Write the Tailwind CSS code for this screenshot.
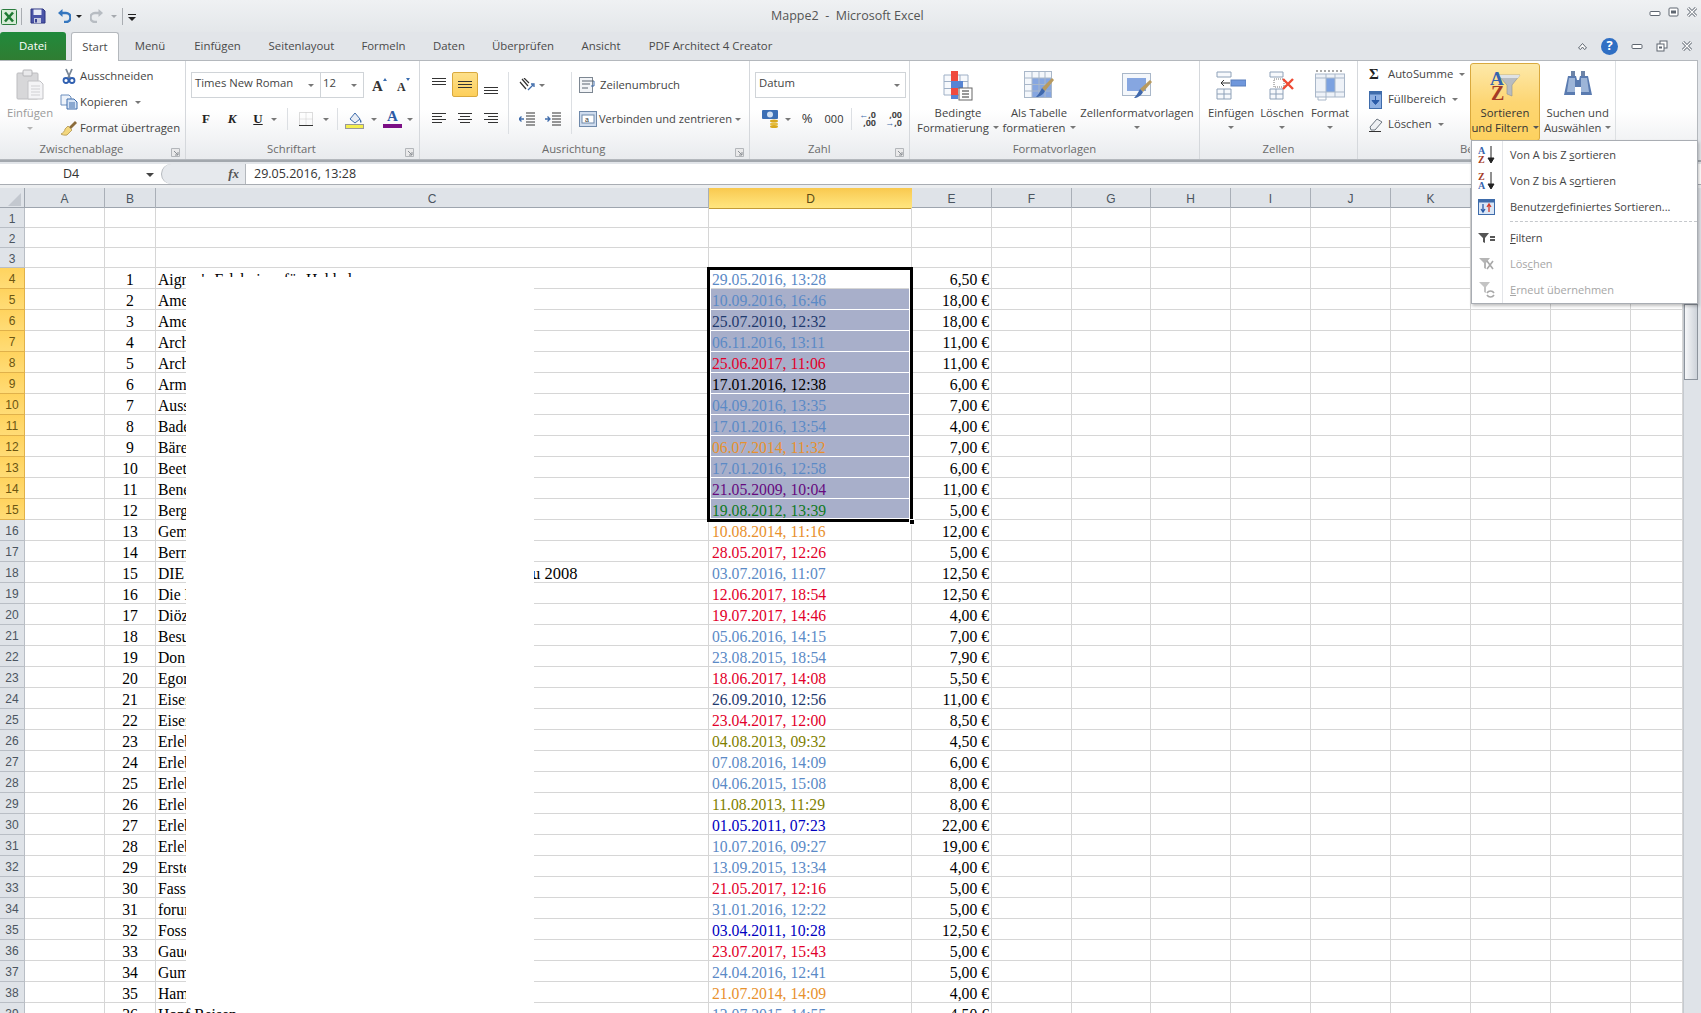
<!DOCTYPE html>
<html lang="de">
<head>
<meta charset="UTF-8">
<title>Mappe2 - Microsoft Excel</title>
<script src="https://cdn.jsdelivr.net/npm/@tailwindcss/browser@4"></script>
</head>
<body class="bg-white">
<div class="relative w-[1701px] h-[1013px] overflow-hidden flex flex-col font-['Open_Sans',sans-serif] text-[11.3px] text-[#444] bg-[#e2e5e9]">

  <!-- title bar -->
  <div class="relative h-[32px] shrink-0 flex items-center bg-linear-to-b from-[#eff1f3] to-[#e4e7ea]">
    <svg class="ml-[1px] mt-[1px]" width="16" height="16" viewBox="0 0 16 16"><rect x=".5" y=".5" width="15" height="15" rx="1" fill="#d8ecd8" stroke="#2b7d3f"/><path d="M4 3.5l8 9M12 3.5l-8 9" stroke="#1d7a32" stroke-width="2.6"/></svg>
    <div class="ml-[4px] w-px h-[17px] bg-[#a9adb2]"></div>
    <svg class="ml-[8px]" width="16" height="16" viewBox="0 0 16 16"><path d="M1 1h12l2 2v12H1z" fill="#4b55a8" stroke="#2c3580"/><rect x="3.5" y="1.500" width="8" height="5.500" fill="#e7eaf5"/><rect x="4" y="10" width="7" height="5" fill="#c7cbe0"/><rect x="5" y="11" width="2" height="3.500" fill="#3a4392"/></svg>
    <svg class="ml-[11px]" width="14" height="14" viewBox="0 0 14 14"><path d="M3 4h6a3.500 3.500 0 0 1 0 9H7" fill="none" stroke="#3577bf" stroke-width="2.600"/><path d="M5.500 0v8L1 4z" fill="#3577bf"/></svg>
    <div class="ml-[5px] w-0 h-0 border-x-[3px] border-t-[3px] border-x-transparent border-t-[#222]"></div>
    <svg class="ml-[8px]" width="14" height="14" viewBox="0 0 14 14"><path d="M11 4H5a3.500 3.500 0 0 0 0 9h2" fill="none" stroke="#b7bcc2" stroke-width="2.400"/><path d="M8.500 0v8L13 4z" fill="#b7bcc2"/></svg>
    <div class="ml-[7px] w-0 h-0 border-x-[3px] border-t-[3px] border-x-transparent border-t-[#a5a9ae]"></div>
    <div class="ml-[5px] w-px h-[17px] bg-[#a9adb2]"></div>
    <div class="ml-[5px] mt-[3px] flex flex-col items-center gap-[2px]"><div class="w-[8px] h-px bg-[#222]"></div><div class="w-0 h-0 border-x-[4px] border-t-[4px] border-x-transparent border-t-[#222]"></div></div>
    <div class="absolute left-[771px] top-[6px] text-[12.5px] leading-[19px] text-[#555]">Mappe2&nbsp; -&nbsp; Microsoft Excel</div>
    <div class="absolute right-[3px] top-[6px] flex items-center gap-[7px]">
      <svg width="12" height="12" viewBox="0 0 12 12"><rect x="1" y="5.500" width="10" height="4" rx="1" fill="#fff" stroke="#5e6670"/></svg>
      <svg width="11" height="11" viewBox="0 0 11 11"><rect x="1" y="1" width="9" height="8" rx="1" fill="#fff" stroke="#5e6670"/><rect x="3" y="3.500" width="5" height="3" fill="#5e6670"/></svg>
      <svg width="12" height="12" viewBox="0 0 12 12"><path d="M2 2l8 8M10 2l-8 8" stroke="#5e6670" stroke-width="3"/><path d="M2 2l8 8M10 2l-8 8" stroke="#fff" stroke-width="1.200"/></svg>
    </div>
  </div>

  <!-- tabs -->
  <div class="relative z-10 h-[28px] shrink-0 flex items-stretch text-[11.4px] text-[#4a4a4a]">
    <div class="w-[66px] rounded-t-[3px] flex items-center justify-center bg-linear-to-b from-[#1f8a3c] to-[#2f7d32] text-white">Datei</div>
    <div class="ml-[5px] w-[48px] h-[29px] rounded-t-[3px] flex items-center justify-center bg-white border border-b-0 border-[#b4b8bd]">Start</div>
    <div class="w-[62px] flex items-center justify-center">Menü</div>
    <div class="w-[73px] flex items-center justify-center">Einfügen</div>
    <div class="w-[95px] flex items-center justify-center">Seitenlayout</div>
    <div class="w-[69px] flex items-center justify-center">Formeln</div>
    <div class="w-[62px] flex items-center justify-center">Daten</div>
    <div class="w-[86px] flex items-center justify-center">Überprüfen</div>
    <div class="w-[70px] flex items-center justify-center">Ansicht</div>
    <div class="w-[149px] flex items-center justify-center">PDF Architect 4 Creator</div>
    <div class="ml-auto mr-[8px] flex items-center gap-[13px]">
      <svg width="11" height="10" viewBox="0 0 11 10"><path d="M1.500 7L5.500 2.500 9.500 7 7.500 8.500 5.500 6 3.500 8.500z" fill="#fff" stroke="#5e6670"/></svg>
      <div class="w-[17px] h-[17px] rounded-full bg-[#2f6fc4] text-white text-[13px] font-bold flex items-center justify-center">?</div>
      <svg width="12" height="12" viewBox="0 0 12 12"><rect x="1" y="4.500" width="10" height="4" rx="1" fill="#fff" stroke="#5e6670"/></svg>
      <svg width="12" height="12" viewBox="0 0 12 12"><rect x="4" y="1" width="7" height="7" fill="#fff" stroke="#5e6670"/><rect x="1" y="4" width="7" height="7" fill="#fff" stroke="#5e6670"/><rect x="3" y="6.500" width="3" height="2" fill="#5e6670"/></svg>
      <svg width="12" height="12" viewBox="0 0 12 12"><path d="M2 2l8 8M10 2l-8 8" stroke="#5e6670" stroke-width="3"/><path d="M2 2l8 8M10 2l-8 8" stroke="#fff" stroke-width="1.200"/></svg>
    </div>
  </div>

  <!-- ribbon -->
  <div class="h-[100px] shrink-0 w-[1698px] flex items-stretch border border-l-0 border-[#b4b8bd] bg-linear-to-b from-white via-white to-[#e9ebee]">

    <!-- Zwischenablage -->
    <div class="w-[186px] shrink-0 flex flex-col border-r border-[#d5d8dc]">
      <div class="h-[81px] flex">
        <div class="w-[60px] flex flex-col items-center pt-[8px]">
          <svg width="28" height="31" viewBox="0 0 28 31"><rect x="1" y="4" width="21" height="26" rx="1" fill="#d7d7d9" stroke="#bdbdc0"/><rect x="7" y="1" width="9" height="6" rx="1" fill="#e9e9eb" stroke="#b5b5b8"/><path d="M12 12h12l3 3v15H12z" fill="#f4f4f6" stroke="#c3c3c6"/><path d="M15 17h9M15 20h9M15 23h9M15 26h9" stroke="#d0d0d3"/></svg>
          <div class="mt-[5px] text-[#9a9a9a] leading-[16px]">Einfügen</div>
          <div class="mt-[6px] w-0 h-0 border-x-[3px] border-t-[3px] border-x-transparent border-t-[#b5b5b5]"></div>
        </div>
        <div class="flex flex-col pt-[2px]">
          <div class="h-[26px] flex items-center"><svg class="ml-[2px] mr-[4px]" width="14" height="16" viewBox="0 0 14 16"><path d="M4 1l4 9M10 1L6 10" stroke="#7a8796" stroke-width="1.800"/><circle cx="4" cy="12.500" r="2.500" fill="none" stroke="#2f5fb0" stroke-width="1.800"/><circle cx="10" cy="12.500" r="2.500" fill="none" stroke="#2f5fb0" stroke-width="1.800"/></svg>Ausschneiden</div>
          <div class="h-[26px] flex items-center"><svg class="mr-[2px]" width="18" height="16" viewBox="0 0 18 16"><path d="M1 1h8l2 2v8H1z" fill="#eef3fa" stroke="#6d8fbe"/><path d="M7 5h7l3 3v7H7z" fill="#d6e4f6" stroke="#3f6cab"/><path d="M9 9h6M9 11h6M9 13h6" stroke="#3f6cab"/></svg>Kopieren<div class="ml-[7px] w-0 h-0 border-x-[3px] border-t-[3px] border-x-transparent border-t-[#777]"></div></div>
          <div class="h-[26px] flex items-center"><svg class="mr-[2px]" width="18" height="16" viewBox="0 0 18 16"><path d="M9 7l6-6 2 2-6 6z" fill="#8a6b3a"/><path d="M8 6l4 4-5 5c-2 .5-5 0-6-1 2-1 4-3 4-5z" fill="#f3d77e" stroke="#a78a3f" stroke-width=".7"/></svg>Format übertragen</div>
        </div>
      </div>
      <div class="h-[17px] pb-[2px] relative flex items-center justify-center pr-[22px] text-[#6b6b6b]">Zwischenablage
        <svg class="absolute right-[5px] top-[6px]" width="9" height="9" viewBox="0 0 9 9"><path d="M.5.500h8v8h-8z" fill="#e9e9ea" stroke="#b3b6ba"/><path d="M3 3l4 4M7 4v3H4" fill="none" stroke="#8b8f94"/></svg>
      </div>
    </div>

    <!-- Schriftart -->
    <div class="w-[234px] shrink-0 flex flex-col border-r border-[#d5d8dc]">
      <div class="h-[81px] flex flex-col pt-[11px]">
        <div class="h-[26px] flex items-center pl-[5px]">
          <div class="w-[130px] h-[26px] pb-[3px] border border-[#d0d4d8] bg-white flex items-center pl-[3px] relative">Times New Roman<div class="absolute right-[6px] top-[11px] w-0 h-0 border-x-[3px] border-t-[3px] border-x-transparent border-t-[#777]"></div></div>
          <div class="w-[43px] h-[26px] pb-[3px] border border-l-0 border-[#d0d4d8] bg-white flex items-center pl-[2px] relative">12<div class="absolute right-[6px] top-[11px] w-0 h-0 border-x-[3px] border-t-[3px] border-x-transparent border-t-[#777]"></div></div>
          <svg class="ml-[7px]" width="16" height="16" viewBox="0 0 16 16"><text x="1" y="14" font-family="Liberation Serif" font-weight="700" font-size="15" fill="#333">A</text><path d="M12 4l2-3 2 3z" fill="#3a6db0"/></svg>
          <svg class="ml-[8px]" width="16" height="16" viewBox="0 0 16 16"><text x="2" y="14" font-family="Liberation Serif" font-weight="700" font-size="12" fill="#333">A</text><path d="M11 1l2 3 2-3z" fill="#3a6db0"/></svg>
        </div>
        <div class="mt-[8px] h-[26px] flex items-center pl-[7px] font-['Liberation_Serif',serif] text-[13px] font-bold text-[#222]">
          <div class="w-[26px] text-center">F</div>
          <div class="w-[26px] text-center italic">K</div>
          <div class="w-[26px] text-center underline">U</div>
          <div class="w-0 h-0 border-x-[3px] border-t-[3px] border-x-transparent border-t-[#777]"></div>
          <div class="ml-[10px] w-px h-[22px] bg-[#dcdfe3]"></div>
          <svg class="ml-[11px]" width="14" height="14" viewBox="0 0 14 14"><path d="M.5.500h13v13H.5z" fill="none" stroke="#bbb" stroke-dasharray="1 1"/><path d="M7 .5v13M.5 7h13" stroke="#ccc" stroke-dasharray="1 1"/><path d="M0 13.500h14" stroke="#333"/></svg>
          <div class="ml-[10px] w-0 h-0 border-x-[3px] border-t-[3px] border-x-transparent border-t-[#777]"></div>
          <div class="ml-[8px] w-px h-[22px] bg-[#dcdfe3]"></div>
          <svg class="ml-[7px]" width="19" height="19" viewBox="0 0 19 19"><path d="M5 9l5-6 5 6-5 4z" fill="#e8edf5" stroke="#3f6cab"/><path d="M15 9c1.500 1 2 3 1 4-1-.5-1.500-2-1-4z" fill="#3f6cab"/><rect x=".5" y="14.500" width="18" height="4" fill="#f4ee4e" stroke="#999"/></svg>
          <div class="ml-[7px] w-0 h-0 border-x-[3px] border-t-[3px] border-x-transparent border-t-[#777]"></div>
          <div class="ml-[6px] w-[19px] flex flex-col items-center"><div class="leading-[13px] text-[15px] text-[#2b5aa5]">A</div><div class="mt-[1px] w-[19px] h-[4px] bg-[#7b0f85]"></div></div>
          <div class="ml-[5px] w-0 h-0 border-x-[3px] border-t-[3px] border-x-transparent border-t-[#777]"></div>
        </div>
      </div>
      <div class="h-[17px] pb-[2px] relative flex items-center justify-center pr-[22px] text-[#6b6b6b]">Schriftart
        <svg class="absolute right-[5px] top-[6px]" width="9" height="9" viewBox="0 0 9 9"><path d="M.5.500h8v8h-8z" fill="#e9e9ea" stroke="#b3b6ba"/><path d="M3 3l4 4M7 4v3H4" fill="none" stroke="#8b8f94"/></svg>
      </div>
    </div>

    <!-- Ausrichtung -->
    <div class="w-[330px] shrink-0 flex flex-col border-r border-[#d5d8dc]">
      <div class="h-[81px] flex pt-[11px]">
        <div class="w-[88px] pl-[6px] flex flex-col">
          <div class="h-[26px] flex">
            <div class="w-[26px] flex justify-center pt-[6px]"><svg width="14" height="9" viewBox="0 0 14 9"><path d="M0 .5h14M0 3.500h14M0 6.500h14" stroke="#333"/></svg></div>
            <div class="w-[26px] h-[25px] flex items-center justify-center rounded-[2px] border border-[#d9a93e] bg-linear-to-b from-[#fde08a] to-[#fdcf5a]"><svg width="14" height="9" viewBox="0 0 14 9"><path d="M0 1.500h14M0 4.500h14M0 7.500h14" stroke="#333"/></svg></div>
            <div class="w-[26px] flex justify-center pt-[13px]"><svg width="14" height="9" viewBox="0 0 14 9"><path d="M0 2.500h14M0 5.500h14M0 8.500h14" stroke="#333"/></svg></div>
          </div>
          <div class="mt-[8px] h-[26px] flex items-center">
            <div class="w-[26px] flex justify-center"><svg width="14" height="12" viewBox="0 0 14 12"><path d="M0 .5h14M0 3.500h10M0 6.500h14M0 9.500h10" stroke="#333"/></svg></div>
            <div class="w-[26px] flex justify-center"><svg width="14" height="12" viewBox="0 0 14 12"><path d="M0 .5h14M2 3.500h10M0 6.500h14M2 9.500h10" stroke="#333"/></svg></div>
            <div class="w-[26px] flex justify-center"><svg width="14" height="12" viewBox="0 0 14 12"><path d="M0 .5h14M4 3.500h10M0 6.500h14M4 9.500h10" stroke="#333"/></svg></div>
          </div>
        </div>
        <div class="w-px h-[62px] bg-[#dcdfe3]"></div>
        <div class="w-[62px] flex flex-col pl-[10px]">
          <div class="h-[26px] flex items-center"><svg width="16" height="14" viewBox="0 0 16 14"><path d="M1 4l6 7M3 1l6 7M5 0l5 5" stroke="#333" stroke-width="1.200"/><path d="M9 12l5-5M12 6h3v3" fill="none" stroke="#3f6cab" stroke-width="1.300"/></svg><div class="ml-[4px] w-0 h-0 border-x-[3px] border-t-[3px] border-x-transparent border-t-[#777]"></div></div>
          <div class="mt-[8px] h-[26px] flex items-center gap-[10px]">
            <svg width="16" height="14" viewBox="0 0 16 14"><path d="M7 1h9M7 4h9M7 7h9M7 10h9M7 13h9" stroke="#333"/><path d="M5 7H0M2.500 4.500L0 7l2.500 2.500" fill="none" stroke="#3f6cab" stroke-width="1.300"/></svg>
            <svg width="16" height="14" viewBox="0 0 16 14"><path d="M7 1h9M7 4h9M7 7h9M7 10h9M7 13h9" stroke="#333"/><path d="M0 7h5M2.500 4.500L5 7 2.500 9.500" fill="none" stroke="#3f6cab" stroke-width="1.300"/></svg>
          </div>
        </div>
        <div class="w-px h-[62px] bg-[#dcdfe3]"></div>
        <div class="flex-1 flex flex-col pl-[7px] whitespace-nowrap">
          <div class="h-[26px] flex items-center"><svg class="mr-[3px]" width="18" height="18" viewBox="0 0 18 18"><rect x=".5" y="1.500" width="13" height="15" fill="#f2f4f7" stroke="#7d8792"/><path d="M3 5h12M3 8h8M3 12h6" stroke="#5a6570"/><path d="M15 5v5h-3" fill="none" stroke="#3f6cab"/></svg>Zeilenumbruch</div>
          <div class="mt-[8px] h-[26px] flex items-center"><svg class="mr-[2px] shrink-0" width="18" height="16" viewBox="0 0 18 16"><rect x=".5" y=".5" width="17" height="15" fill="#cfdcee" stroke="#6f89aa"/><rect x="3" y="4" width="12" height="8" fill="#fff" stroke="#6f89aa"/><text x="6" y="11" font-size="7" font-family="Liberation Sans" fill="#333">a</text></svg><span class="text-[11.1px]">Verbinden und zentrieren</span><div class="ml-[3px] w-0 h-0 border-x-[3px] border-t-[3px] border-x-transparent border-t-[#777]"></div></div>
        </div>
      </div>
      <div class="h-[17px] pb-[2px] relative pl-[122px] flex items-center text-[#6b6b6b]">Ausrichtung
        <svg class="absolute right-[5px] top-[6px]" width="9" height="9" viewBox="0 0 9 9"><path d="M.5.500h8v8h-8z" fill="#e9e9ea" stroke="#b3b6ba"/><path d="M3 3l4 4M7 4v3H4" fill="none" stroke="#8b8f94"/></svg>
      </div>
    </div>

    <!-- Zahl -->
    <div class="w-[160px] shrink-0 flex flex-col border-r border-[#d5d8dc]">
      <div class="h-[81px] flex flex-col pt-[11px] pl-[5px]">
        <div class="relative w-[151px] h-[26px] pb-[3px] border border-[#d0d4d8] bg-white flex items-center pl-[3px]">Datum<div class="absolute right-[5px] top-[11px] w-0 h-0 border-x-[3px] border-t-[3px] border-x-transparent border-t-[#777]"></div></div>
        <div class="mt-[8px] h-[26px] flex items-center">
          <svg class="ml-[7px]" width="18" height="18" viewBox="0 0 18 18"><rect x="0" y="0" width="16" height="9" rx="1" fill="#3b6fb5"/><circle cx="8" cy="4.500" r="3" fill="#cfe0f4"/><ellipse cx="12" cy="11" rx="4" ry="1.500" fill="#d9a91f"/><ellipse cx="12" cy="14" rx="4" ry="1.500" fill="#e6bd3d"/><ellipse cx="12" cy="16.500" rx="4" ry="1.500" fill="#d9a91f"/></svg>
          <div class="ml-[5px] w-0 h-0 border-x-[3px] border-t-[3px] border-x-transparent border-t-[#777]"></div>
          <div class="ml-[9px] w-[14px] text-center text-[13px] text-[#333]">%</div>
          <div class="ml-[9px] text-[#333] text-[11px] w-[22px] text-center">000</div>
          <div class="ml-[6px] w-px h-[22px] bg-[#dcdfe3]"></div>
          <div class="ml-[6px] w-[18px] flex flex-col text-[9px] leading-[8px] font-bold text-right text-[#444]"><div><span class="text-[#3f6cab]">←</span>,0</div><div>,00</div></div>
          <div class="ml-[8px] w-[18px] flex flex-col text-[9px] leading-[8px] font-bold text-right text-[#444]"><div>,00</div><div><span class="text-[#3f6cab]">→</span>,0</div></div>
        </div>
      </div>
      <div class="h-[17px] pb-[2px] relative pl-[58px] flex items-center text-[#6b6b6b]">Zahl
        <svg class="absolute right-[5px] top-[6px]" width="9" height="9" viewBox="0 0 9 9"><path d="M.5.500h8v8h-8z" fill="#e9e9ea" stroke="#b3b6ba"/><path d="M3 3l4 4M7 4v3H4" fill="none" stroke="#8b8f94"/></svg>
      </div>
    </div>

    <!-- Formatvorlagen -->
    <div class="w-[290px] shrink-0 flex flex-col border-r border-[#d5d8dc]">
      <div class="h-[81px] flex leading-[15px] text-center pl-[3px]">
        <div class="w-[90px] flex flex-col items-center pt-[10px]">
          <svg width="30" height="30" viewBox="0 0 30 30"><path d="M1 4h24v20H1z" fill="#f7f9fc" stroke="#9fb0c6"/><path d="M1 10.500h24M1 17.500h24M9 4v20M17 4v20" stroke="#9fb0c6"/><rect x="8" y="0" width="7" height="10" fill="#ef4b3f"/><rect x="8" y="10" width="12" height="7" fill="#5684d4"/><rect x="8" y="17" width="7" height="8" fill="#ef4b3f"/><rect x="8" y="24" width="7" height="4" fill="#5684d4"/><rect x="16" y="17" width="13" height="12" fill="#fff" stroke="#666"/><path d="M19 20h7M19 23h7M19 26h7" stroke="#333"/></svg>
          <div class="mt-[4px]">Bedingte</div>
          <div class="flex items-center">Formatierung<div class="ml-[4px] w-0 h-0 border-x-[3px] border-t-[3px] border-x-transparent border-t-[#777]"></div></div>
        </div>
        <div class="w-[72px] flex flex-col items-center pt-[10px]">
          <svg width="30" height="30" viewBox="0 0 30 30"><rect x=".5" y=".5" width="27" height="26" fill="#f4f7fb" stroke="#a9b7c9"/><rect x="8" y="7" width="19" height="19" fill="#86a6e0"/><path d="M0 7h27M0 13.500h27M0 20h27M8 0v27M15 0v27M21 0v27" stroke="#a9b7c9"/><path d="M28 7l2 2-9 11-3-3z" fill="#b89a5f"/><path d="M18 17l3 3c-2 4-6 6-9 6 2-2 4-5 6-9z" fill="#3f68ad"/></svg>
          <div class="mt-[4px]">Als Tabelle</div>
          <div class="flex items-center">formatieren<div class="ml-[4px] w-0 h-0 border-x-[3px] border-t-[3px] border-x-transparent border-t-[#777]"></div></div>
        </div>
        <div class="w-[124px] flex flex-col items-center pt-[10px]">
          <svg width="30" height="30" viewBox="0 0 30 30"><rect x=".5" y="2.500" width="28" height="22" fill="#f4f7fb" stroke="#a9b7c9"/><rect x="5" y="7" width="19" height="13" fill="#86a6e0"/><path d="M28 9l2 2-9 10-3-3z" fill="#b89a5f"/><path d="M18 18l3 3c-2 4-6 6-9 6 2-2 4-5 6-9z" fill="#3f68ad"/></svg>
          <div class="mt-[4px]">Zellenformatvorlagen</div>
          <div class="mt-[6px] w-0 h-0 border-x-[3px] border-t-[3px] border-x-transparent border-t-[#777]"></div>
        </div>
      </div>
      <div class="h-[17px] pb-[2px] flex items-center justify-center text-[#6b6b6b]">Formatvorlagen</div>
    </div>

    <!-- Zellen -->
    <div class="w-[158px] shrink-0 flex flex-col border-r border-[#d5d8dc]">
      <div class="h-[81px] flex leading-[15px] text-center pl-[5px]">
        <div class="w-[52px] flex flex-col items-center pt-[10px]">
          <svg width="30" height="30" viewBox="0 0 30 30"><path d="M1 1h14v5H1zM1 18h14v10H1zM8 18v10M1 23h14" fill="#f7f9fc" stroke="#8ea1b8"/><rect x="15" y="9" width="15" height="6" fill="#6f97dc" stroke="#5a7fbb"/><path d="M5 12h9M8 9l-3 3 3 3" fill="none" stroke="#333"/></svg>
          <div class="mt-[4px]">Einfügen</div>
          <div class="mt-[6px] w-0 h-0 border-x-[3px] border-t-[3px] border-x-transparent border-t-[#777]"></div>
        </div>
        <div class="w-[50px] flex flex-col items-center pt-[10px]">
          <svg width="26" height="30" viewBox="0 0 26 30"><path d="M1 1h13v5H1zM1 18h13v10H1zM7 18v10M1 23h13" fill="#f7f9fc" stroke="#8ea1b8"/><rect x="5" y="8" width="10" height="8" fill="none" stroke="#777" stroke-dasharray="1 1"/><path d="M14 8l10 10M24 8L14 18" stroke="#ee4b34" stroke-width="2.400"/></svg>
          <div class="mt-[4px]">Löschen</div>
          <div class="mt-[6px] w-0 h-0 border-x-[3px] border-t-[3px] border-x-transparent border-t-[#777]"></div>
        </div>
        <div class="w-[46px] flex flex-col items-center pt-[9px]">
          <svg width="30" height="31" viewBox="0 0 30 31"><path d="M1 1h28" stroke="#555" stroke-dasharray="2 2"/><rect x=".5" y="4" width="29" height="23" fill="#eef2f8" stroke="#a9b7c9"/><rect x="11" y="8" width="9" height="14" fill="#7ba1e0"/><path d="M0 8h29M0 22h29M11 4v23M20 4v23" stroke="#a9b7c9"/><path d="M3 27v3h8v-3" fill="none" stroke="#a9b7c9"/></svg>
          <div class="mt-[4px]">Format</div>
          <div class="mt-[6px] w-0 h-0 border-x-[3px] border-t-[3px] border-x-transparent border-t-[#777]"></div>
        </div>
      </div>
      <div class="h-[17px] pb-[2px] flex items-center justify-center text-[#6b6b6b]">Zellen</div>
    </div>

    <!-- Bearbeiten -->
    <div class="w-[258px] shrink-0 flex flex-col border-r border-[#dde0e3]">
      <div class="h-[81px] flex">
        <div class="w-[112px] flex flex-col pt-[1px] pl-[11px]">
          <div class="h-[25px] flex items-center"><div class="w-[19px] text-[15px] font-bold font-['Liberation_Serif',serif] text-[#222] leading-none">Σ</div>AutoSumme<div class="ml-[6px] w-0 h-0 border-x-[3px] border-t-[3px] border-x-transparent border-t-[#777]"></div></div>
          <div class="h-[25px] flex items-center"><svg class="mr-[6px]" width="13" height="18" viewBox="0 0 13 18"><rect x=".5" y=".5" width="12" height="17" fill="#8fb0e2" stroke="#3f6cab"/><rect x=".5" y=".5" width="12" height="3" fill="#3f6cab"/><path d="M6.500 5v7M3 9.500l3.500 4 3.500-4z" fill="#2a5aa8" stroke="#2a5aa8"/></svg>Füllbereich<div class="ml-[6px] w-0 h-0 border-x-[3px] border-t-[3px] border-x-transparent border-t-[#777]"></div></div>
          <div class="h-[25px] flex items-center"><svg class="mr-[5px]" width="14" height="14" viewBox="0 0 14 14"><path d="M1 9l7-8 5 3-7 8H2z" fill="#eef0f3" stroke="#6d7680"/><path d="M0 13.500h12" stroke="#333"/></svg>Löschen<div class="ml-[6px] w-0 h-0 border-x-[3px] border-t-[3px] border-x-transparent border-t-[#777]"></div></div>
        </div>
        <div class="mt-[2px] w-[71px] h-[78px] rounded-[3px] border border-[#d9a93e] bg-linear-to-b from-[#fde9a8] via-[#fdd673] to-[#fdd15f] flex flex-col items-center leading-[15px] text-center pt-[6px]">
          <svg width="32" height="31" viewBox="0 0 32 31"><path d="M9 5h22l-8 10v11l-5-2v-9z" fill="#b8bcc0" stroke="#8d9196" stroke-width=".6"/><path d="M9 5h22l-2 3H12z" fill="#dfe2e5"/><text x="1" y="15" font-family="Liberation Serif" font-weight="700" font-size="19" fill="#3563ad">A</text><text x="2" y="30" font-family="Liberation Serif" font-weight="700" font-size="20" fill="#a53b26">Z</text></svg>
          <div class="mt-[4px] text-[#333]">Sortieren</div>
          <div class="flex items-center text-[#333]">und Filtern<div class="ml-[4px] w-0 h-0 border-x-[3px] border-t-[3px] border-x-transparent border-t-[#555]"></div></div>
        </div>
        <div class="w-[75px] flex flex-col items-center leading-[15px] text-center pt-[10px]">
          <svg width="30" height="25" viewBox="0 0 30 25"><path d="M8 0h4v5H8zM18 0h4v5h-4z" fill="#6d84a8"/><path d="M5 5h8l1 4h2l1-4h8l4 19H18v-8h-6v8H1z" fill="#5a7bb0"/><path d="M6 7h6v14H4zM18 7h6l2 14h-8z" fill="#9db5d8"/></svg>
          <div class="mt-[9px]">Suchen und</div>
          <div class="flex items-center">Auswählen<div class="ml-[4px] w-0 h-0 border-x-[3px] border-t-[3px] border-x-transparent border-t-[#777]"></div></div>
        </div>
      </div>
      <div class="h-[17px] pb-[2px] w-[112px] overflow-hidden whitespace-nowrap flex items-center pl-[102px] text-[#6b6b6b]">Bearbeiten</div>
    </div>
  </div>

  <!-- formula bar -->
  <div class="h-[4px] shrink-0 border-t-2 border-[#a3a8ae] bg-[#e2e5e9]"></div>
  <div class="h-[21px] shrink-0 flex items-center bg-white border-b border-[#a9adb3] text-[12.5px] text-[#333]">
    <div class="w-[161px] h-full pt-px relative flex items-center pl-[63px]">D4<div class="absolute right-[7px] top-[9px] w-0 h-0 border-x-[4px] border-t-[4px] border-x-transparent border-t-[#444]"></div></div>
    <div class="w-[84px] h-full rounded-l-full border-l border-[#b4b8bd] bg-[#e6e9ed] flex items-center justify-end pr-[6px] font-['Liberation_Serif',serif] italic font-bold text-[13px] text-[#555]">fx</div>
    <div class="h-full pl-[8px] pt-px flex items-center border-l border-[#b4b8bd]">29.05.2016, 13:28</div>
  </div>
  <div class="h-[3px] shrink-0 bg-[#eceef0]"></div>

  <!-- sheet -->
  <div class="relative flex-1 min-h-0 flex bg-white">
    <div class="w-[1683px] shrink-0 overflow-hidden" id="sheet">
      <div class="h-[20px] grid grid-cols-[25px_80px_51px_553px_203px_80px_80px_79px_80px_80px_80px_80px_80px_80px_52px] bg-[#dfe3e8] text-[12px] text-[#4b5560] font-['Liberation_Sans',sans-serif] border-b border-[#9ea5ae]">
        <div class="border-r border-[#9ea5ae] relative"><svg class="absolute right-[3px] bottom-[2px]" width="13" height="13" viewBox="0 0 13 13"><path d="M13 0v13H0z" fill="#c3c8cf"/></svg></div>
        <div class="pt-[2px] flex items-center justify-center border-r border-[#a9afb7]">A</div>
        <div class="pt-[2px] flex items-center justify-center border-r border-[#a9afb7]">B</div>
        <div class="pt-[2px] flex items-center justify-center border-r border-[#a9afb7]">C</div>
        <div class="pt-[2px] flex items-center justify-center -mb-px border-b border-[#c29b37] bg-linear-to-b from-[#f9c94e] to-[#ffe67f] text-[#5b4a14]">D</div>
        <div class="pt-[2px] flex items-center justify-center border-r border-[#a9afb7]">E</div>
        <div class="pt-[2px] flex items-center justify-center border-r border-[#a9afb7]">F</div>
        <div class="pt-[2px] flex items-center justify-center border-r border-[#a9afb7]">G</div>
        <div class="pt-[2px] flex items-center justify-center border-r border-[#a9afb7]">H</div>
        <div class="pt-[2px] flex items-center justify-center border-r border-[#a9afb7]">I</div>
        <div class="pt-[2px] flex items-center justify-center border-r border-[#a9afb7]">J</div>
        <div class="pt-[2px] flex items-center justify-center border-r border-[#a9afb7]">K</div>
        <div class="pt-[2px] flex items-center justify-center border-r border-[#a9afb7]">L</div>
        <div class="pt-[2px] flex items-center justify-center border-r border-[#a9afb7]">M</div>
        <div class="pt-[2px] flex items-center justify-center">N</div>
      </div>
      <div id="rows"></div>
    </div>

    <!-- scrollbar -->
    <div class="w-[18px] shrink-0 bg-[#dfe3e8] border-l border-[#c5cad0] relative">
      <div class="absolute left-0 top-[116px] w-[14px] h-[76px] border border-[#8c939c] bg-linear-to-r from-[#f6f7f9] to-[#cdd2d9]"></div>
    </div>

    <!-- white patch over column C -->
    <div class="absolute left-[186px] top-[89px] w-[348px] h-[727px] bg-white"></div>

    <!-- selection frame -->
    <div class="absolute left-[707px] top-[79px] w-[206px] h-[255px] border-[3px] border-black shadow-[inset_0_0_0_1px_#fff]"></div>
    <div class="absolute left-[909px] top-[331px] w-[6px] h-[6px] bg-black border border-white"></div>
  </div>

  <!-- sort menu -->
  <div class="absolute left-[1471px] top-[140px] w-[227px] h-[164px] bg-white border border-[#a9adb3] shadow-[1px_2px_3px_rgba(0,0,0,0.25)] flex flex-col text-[11px] text-[#444]">
    <div class="absolute left-[30px] top-0 bottom-0 w-px bg-[#e3e5e8]"></div>
    <div class="h-[26px] mt-px flex items-center"><svg class="ml-[6px] mr-[14px]" width="18" height="18" viewBox="0 0 18 18"><text x="0" y="8" font-family="Liberation Serif" font-weight="700" font-size="10" fill="#3563ad">A</text><text x="0" y="17" font-family="Liberation Serif" font-weight="700" font-size="10" fill="#a53b26">Z</text><path d="M13 0v16M10 12l3 5 3-5z" stroke="#222" fill="#222"/></svg><div>Von A bis Z <span class="underline">s</span>ortieren</div></div>
    <div class="h-[26px] flex items-center"><svg class="ml-[6px] mr-[14px]" width="18" height="18" viewBox="0 0 18 18"><text x="0" y="8" font-family="Liberation Serif" font-weight="700" font-size="10" fill="#a53b26">Z</text><text x="0" y="17" font-family="Liberation Serif" font-weight="700" font-size="10" fill="#3563ad">A</text><path d="M13 0v16M10 12l3 5 3-5z" stroke="#222" fill="#222"/></svg><div>Von Z bis A s<span class="underline">o</span>rtieren</div></div>
    <div class="h-[26px] flex items-center"><svg class="ml-[6px] mr-[14px]" width="18" height="16" viewBox="0 0 18 16"><rect x=".5" y=".5" width="16" height="15" fill="#dbe7f6" stroke="#3f6cab"/><rect x=".5" y=".5" width="16" height="3" fill="#3f6cab"/><path d="M5 5v8M3 10l2 3 2-3" fill="none" stroke="#2a5aa8" stroke-width="1.300"/><path d="M11 13V5M9 8l2-3 2 3" fill="none" stroke="#d33c2c" stroke-width="1.300"/></svg><div>Benutzer<span class="underline">d</span>efiniertes Sortieren...</div></div>
    <div class="ml-[38px] mt-[1px] mb-[3px] border-t border-dashed border-[#c5c8cc]"></div>
    <div class="h-[26px] flex items-center"><svg class="ml-[6px] mr-[14px]" width="18" height="12" viewBox="0 0 18 12"><path d="M0 1h11L7 6v5L5 10V6z" fill="#555"/><path d="M12 5h5M12 8h5" stroke="#222" stroke-width="1.500"/></svg><div><span class="underline">F</span>iltern</div></div>
    <div class="h-[26px] flex items-center text-[#a6a6a6]"><svg class="ml-[6px] mr-[14px]" width="18" height="14" viewBox="0 0 18 14"><path d="M1 1h11L8 6v6L6 11V6z" fill="#b5b5b5"/><path d="M9 4l6 8M15 4l-6 8" stroke="#a8a8a8" stroke-width="1.600"/></svg><div>Lös<span class="underline">c</span>hen</div></div>
    <div class="h-[26px] flex items-center text-[#a6a6a6]"><svg class="ml-[6px] mr-[14px]" width="18" height="18" viewBox="0 0 18 18"><path d="M1 1h11L8 6v6L6 11V6z" fill="#c4c4c4"/><path d="M9 12a4 4 0 0 1 7 0M9 14a4 4 0 0 0 7 0" fill="none" stroke="#a8a8a8" stroke-width="1.600"/></svg><div><span class="underline">E</span>rneut übernehmen</div></div>
  </div>
</div>

<script>
  // rows 4-39: name, date, colour key, price
  const data = [
    ['Aigner\'s Erlebnisse für Hubbel','29.05.2016, 13:28','b','6,50'],['Ame','10.09.2016, 16:46','b','18,00'],['Ame','25.07.2010, 12:32','n','18,00'],
    ['Arch','06.11.2016, 13:11','b','11,00'],['Arch','25.06.2017, 11:06','r','11,00'],['Arm','17.01.2016, 12:38','k','6,00'],
    ['Auss','04.09.2016, 13:35','b','7,00'],['Bade','17.01.2016, 13:54','b','4,00'],['Bäre','06.07.2014, 11:32','o','7,00'],
    ['Beet','17.01.2016, 12:58','b','6,00'],['Bene','21.05.2009, 10:04','p','11,00'],['Berg','19.08.2012, 13:39','g','5,00'],
    ['Gem','10.08.2014, 11:16','o','12,00'],['Bern','28.05.2017, 12:26','r','5,00'],['DIE','03.07.2016, 11:07','b','12,50'],
    ['Die I','12.06.2017, 18:54','r','12,50'],['Diöz','19.07.2017, 14:46','r','4,00'],['Besu','05.06.2016, 14:15','b','7,00'],
    ['Don','23.08.2015, 18:54','b','7,90'],['Egor','18.06.2017, 14:08','r','5,50'],['Eiser','26.09.2010, 12:56','n','11,00'],
    ['Eiser','23.04.2017, 12:00','r','8,50'],['Erleb','04.08.2013, 09:32','v','4,50'],['Erleb','07.08.2016, 14:09','b','6,00'],
    ['Erleb','04.06.2015, 15:08','b','8,00'],['Erleb','11.08.2013, 11:29','v','8,00'],['Erleb','01.05.2011, 07:23','d','22,00'],
    ['Erleb','10.07.2016, 09:27','b','19,00'],['Erste','13.09.2015, 13:34','b','4,00'],['Fass','21.05.2017, 12:16','r','5,00'],
    ['forum','31.01.2016, 12:22','b','5,00'],['Foss','03.04.2011, 10:28','d','12,50'],['Gaue','23.07.2017, 15:43','r','5,00'],
    ['Gum','24.04.2016, 12:41','b','5,00'],['Ham','21.07.2014, 14:09','o','4,00'],['Hopf Reisen','12.07.2015, 14:55','b','4,50']
  ];
  const colours = {
    b: 'text-[#5b8ac6]', n: 'text-[#1f3a6e]', r: 'text-[#e2002a]', o: 'text-[#e8912d]', p: 'text-[#660a7e]',
    g: 'text-[#0f7a1f]', k: 'text-black', v: 'text-[#7f7f00]', d: 'text-[#0000bf]'
  };
  const rowClass = 'grid grid-cols-[25px_80px_51px_553px_203px_80px_80px_79px_80px_80px_80px_80px_80px_80px_52px] font-[\'Liberation_Serif\',serif] text-[15.7px] text-black';
  const cell = 'border-r border-b border-[#d6d6d6]';

  function head(n, active) {
    const look = active
      ? 'bg-linear-to-b from-[#ffd35e] to-[#ffdc76] border-[#e0b14a] text-[#6b5512]'
      : 'bg-[#dfe3e8] border-[#b9bec5] text-[#4b5560]';
    return `<div class="${look} border-r border-b pt-[2px] flex items-center justify-center font-['Liberation_Sans',sans-serif] text-[12px]">${n}</div>`;
  }
  function blanks(n) {
    return `<div class="${cell}"></div>`.repeat(n);
  }

  let html = '';
  for (let n = 1; n <= 3; n++) {
    html += `<div class="${rowClass} grid-rows-[20px]">${head(n, false)}${blanks(14)}</div>`;
  }
  data.forEach((row, i) => {
    const n = i + 4;
    const picked = n >= 5 && n <= 15;
    const dateCell = picked ? 'bg-[#a8afca] border-b border-white' : cell;
    const tail = n === 18 ? '<span class="absolute left-[376px] text-[16.5px]">u 2008</span>' : '';
    html += `<div class="${rowClass} grid-rows-[21px] leading-[24px]">${head(n, n <= 15)}${blanks(1)}` +
      `<div class="${cell} text-center">${i + 1}</div>` +
      `<div class="${cell} relative pl-[2px] whitespace-nowrap overflow-visible">${row[0]}${tail}</div>` +
      `<div class="${dateCell} pl-[3px] ${colours[row[2]]}">${row[1]}</div>` +
      `<div class="${cell} text-right pr-[2px]">${row[3]} €</div>` +
      `${blanks(9)}</div>`;
  });
  document.getElementById('rows').innerHTML = html;
</script>
</body>
</html>
